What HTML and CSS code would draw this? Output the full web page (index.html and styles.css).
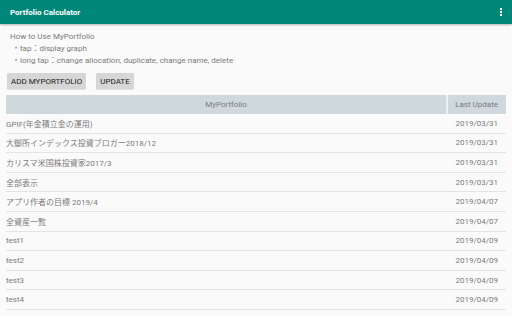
FILE: index.html
```html
<!DOCTYPE html>
<html lang="ja">
<head>
    <meta charset="UTF-8">
    <meta name="viewport" content="width=device-width, initial-scale=1.0">
    <title>Portfolio Calculator</title>
    <link rel="stylesheet" href="styles.css">
</head>
<body>
    <div class="toolbar">
        <div class="title">Portfolio Calculator</div>
        <div class="menu"><span></span><span></span><span></span></div>
    </div>

    <div class="howto">
        <div>How to Use MyPortfolio</div>
        <div class="item">・tap：display graph</div>
        <div class="item">・long tap：change allocation, duplicate, change name, delete</div>
    </div>

    <div class="actions">
        <button>ADD MYPORTFOLIO</button>
        <button>UPDATE</button>
    </div>

    <div class="table">
        <div class="head">
            <div class="name">MyPortfolio</div>
            <div class="date">Last Update</div>
        </div>
        <div class="row"><div class="name">GPIF(年金積立金の運用)</div><div class="date">2019/03/31</div></div>
        <div class="row"><div class="name">大御所インデックス投資ブロガー2018/12</div><div class="date">2019/03/31</div></div>
        <div class="row"><div class="name">カリスマ米国株投資家2017/3</div><div class="date">2019/03/31</div></div>
        <div class="row"><div class="name">全部表示</div><div class="date">2019/03/31</div></div>
        <div class="row"><div class="name">アプリ作者の目標 2019/4</div><div class="date">2019/04/07</div></div>
        <div class="row"><div class="name">全資産一覧</div><div class="date">2019/04/07</div></div>
        <div class="row"><div class="name">test1</div><div class="date">2019/04/09</div></div>
        <div class="row"><div class="name">test2</div><div class="date">2019/04/09</div></div>
        <div class="row"><div class="name">test3</div><div class="date">2019/04/09</div></div>
        <div class="row"><div class="name">test4</div><div class="date">2019/04/09</div></div>
    </div>
</body>
</html>
```

FILE: styles.css
```css
body {
    margin: 0;
    background: #fafafa;
    font-family: Roboto, "Noto Sans CJK JP", sans-serif;
    font-size: 8px;
    color: #7b7b7b;
    overflow: hidden;
}
.toolbar {
    height: 24px;
    background: #00877a;
    display: flex;
    align-items: center;
    justify-content: space-between;
    padding: 0 10px;
    box-shadow: 0 1px 2px rgba(0, 0, 0, 0.3);
}
.toolbar .title {
    color: #ffffff;
    font-size: 8px;
    font-weight: bold;
}
.menu {
    display: flex;
    flex-direction: column;
    gap: 1px;
    margin-top: -1px;
}
.menu span {
    width: 2px;
    height: 2px;
    background: #ffffff;
}
.howto {
    padding: 7px 10px 0;
    line-height: 12px;
}
.howto .item {
    padding-left: 2px;
}
.actions {
    display: flex;
    gap: 10px;
    margin: 6px 0 0 7px;
}
.actions button {
    height: 16px;
    padding: 0 4px;
    border: none;
    border-radius: 1px;
    background: #d6d6d6;
    color: #222222;
    font-family: Roboto, sans-serif;
    font-size: 8px;
    box-shadow: 0 1px 1px rgba(0, 0, 0, 0.1);
}
.table {
    margin: 6px 6px 0;
    width: 500px;
}
.head {
    display: flex;
    height: 19px;
    background: #cfd8dc;
    align-items: center;
}
.head .name {
    flex: 1;
    text-align: center;
    height: 100%;
    line-height: 19px;
    border-right: 2px solid #eef1f2;
}
.head .date {
    width: 50px;
    padding-right: 8px;
    text-align: right;
}
.row {
    display: flex;
    align-items: center;
    height: 19.6px;
    box-sizing: border-box;
    border-bottom: 1px solid #e4e4e4;
}
.row .name {
    flex: 1;
}
.row .date {
    padding-right: 8px;
}
```
